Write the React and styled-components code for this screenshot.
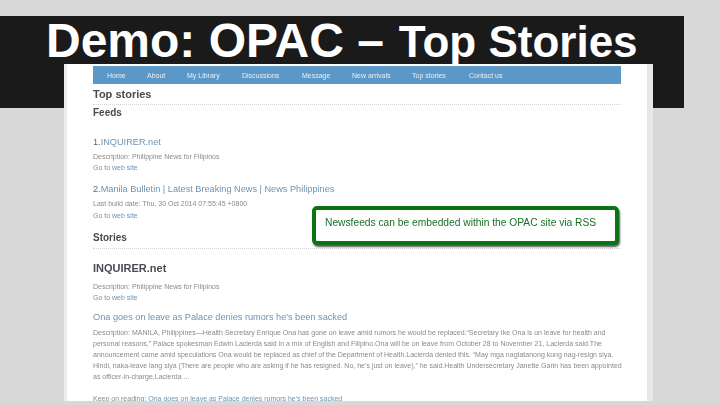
import React from "react";
import styled, { createGlobalStyle } from "styled-components";

const Global = createGlobalStyle`
  html, body { margin: 0; padding: 0; background: #d8d8d8; }
  body { width: 720px; height: 405px; overflow: hidden; font-family: "Liberation Sans", Arial, sans-serif; }
`;

const Slide = styled.div`
  position: relative;
  width: 720px;
  height: 405px;
  padding-top: 16px;
  box-sizing: border-box;
  overflow: hidden;
  background: #d8d8d8;
`;

const TitleBar = styled.header`
  width: 684px;
  height: 92px;
  background: #1a1a1a;
  box-sizing: border-box;
  padding-left: 46px;
  display: flex;
  align-items: baseline;
  color: #fff;
  font-weight: 700;
  line-height: 50px;
  white-space: nowrap;
`;

const TitleMain = styled.span`
  font-size: 48px;
`;

const TitleSub = styled.span`
  font-size: 44px;
  margin-left: 15px;
`;

const Shot = styled.main`
  position: absolute;
  left: 64px;
  top: 64px;
  width: 589px;
  height: 337px;
  box-sizing: border-box;
  background: #fff;
  border-left: 3px solid #ececec;
  border-right: 6px solid #e8e8e8;
  padding: 2px 26px 0 26px;
  overflow: hidden;
  filter: blur(0.45px);
`;

const Nav = styled.nav`
  height: 18px;
  background: #5b98c8;
  display: flex;
  align-items: center;
  color: #e6f0f8;
  font-size: 7px;
`;

const NavItem = styled.span`
  width: ${(p) => p.$w}px;
  flex: none;
  &:first-child { margin-left: 14px; }
`;

const PageTitle = styled.h1`
  margin: 2px 0 0;
  font-size: 11px;
  line-height: 16px;
  font-weight: 700;
  color: #4a4a4a;
`;

const Rule = styled.div`
  border-bottom: 1px dotted #d4d4d4;
  margin-top: ${(p) => p.$top || 0}px;
`;

const SectionTitle = styled.h2`
  margin: ${(p) => p.$top}px 0 0;
  font-size: 10px;
  line-height: 14px;
  font-weight: 700;
  color: #4a4a4a;
`;

const FeedTitle = styled.div`
  margin-top: ${(p) => p.$top}px;
  font-size: 9.18px;
  line-height: 12px;
  color: #6f93b3;
  white-space: nowrap;
`;

const Num = styled.span`
  color: #666;
`;

const Meta = styled.div`
  margin-top: ${(p) => p.$top || 0}px;
  font-size: 7px;
  line-height: 11px;
  color: ${(p) => (p.$link ? "#6f93b3" : "#8a8a8a")};
  white-space: nowrap;
`;

const MetaLabel = styled.span`
  color: #8a8a8a;
`;

const StoryHead = styled.h3`
  margin: 12px 0 0;
  font-size: 11px;
  line-height: 14px;
  font-weight: 700;
  color: #4a4a55;
`;

const Callout = styled.aside`
  position: absolute;
  left: 245px;
  top: 142px;
  width: 307px;
  height: 39px;
  box-sizing: border-box;
  background: #fff;
  border: 4px solid #0a7412;
  border-radius: 5px;
  box-shadow: 1px 2px 2px #555;
  padding-left: 9px;
  font-size: 10.24px;
  line-height: 26px;
  color: #1c6e26;
  white-space: nowrap;
`;

const navItems = [
  ["Home", 40],
  ["About", 40],
  ["My Library", 55],
  ["Discussions", 60],
  ["Message", 50],
  ["New arrivals", 60],
  ["Top stories", 57],
  ["Contact us", 50],
];

const lines = [
  "Description: MANILA, Philippines—Health Secretary Enrique Ona has gone on leave amid rumors he would be replaced.“Secretary Ike Ona is on leave for health and",
  "personal reasons,” Palace spokesman Edwin Lacierda said in a mix of English and Filipino.Ona will be on leave from October 28 to November 21, Lacierda said.The",
  "announcement came amid speculations Ona would be replaced as chief of the Department of Health.Lacierda denied this. “May mga nagtatanong kung nag-resign siya.",
  "Hindi, naka-leave lang siya (There are people who are asking if he has resigned. No, he’s just on leave),” he said.Health Undersecretary Janette Garin has been appointed",
  "as officer-in-charge,Lacierda ...",
];

export default function App() {
  return (
    <Slide>
      <Global />
      <TitleBar>
        <TitleMain>Demo: OPAC –</TitleMain>
        <TitleSub>Top Stories</TitleSub>
      </TitleBar>
      <Shot>
        <Nav>
          {navItems.map(([t, w]) => (
            <NavItem key={t} $w={w}>{t}</NavItem>
          ))}
        </Nav>
        <PageTitle>Top stories</PageTitle>
        <Rule $top={2} />
        <SectionTitle $top={1}>Feeds</SectionTitle>
        <FeedTitle $top={16}><Num>1.</Num>INQUIRER.net</FeedTitle>
        <Meta $top={3}>Description: Philippine News for Filipinos</Meta>
        <Meta $link>Go to web site</Meta>
        <FeedTitle $top={10}><Num>2.</Num>Manila Bulletin | Latest Breaking News | News Philippines</FeedTitle>
        <Meta $top={3}>Last build date: Thu, 30 Oct 2014 07:55:45 +0800</Meta>
        <Meta $top={1} $link>Go to web site</Meta>
        <SectionTitle $top={10}>Stories</SectionTitle>
        <Rule $top={3} />
        <StoryHead>INQUIRER.net</StoryHead>
        <Meta $top={6}>Description: Philippine News for Filipinos</Meta>
        <Meta $link>Go to web site</Meta>
        <FeedTitle $top={8}>Ona goes on leave as Palace denies rumors he's been sacked</FeedTitle>
        <Meta $top={4}>{lines[0]}</Meta>
        {lines.slice(1).map((l) => (
          <Meta key={l}>{l}</Meta>
        ))}
        <Meta $top={11} $link><MetaLabel>Keep on reading: </MetaLabel>Ona goes on leave as Palace denies rumors he's been sacked</Meta>
        <Callout>Newsfeeds can be embedded within the OPAC site via RSS</Callout>
      </Shot>
    </Slide>
  );
}
